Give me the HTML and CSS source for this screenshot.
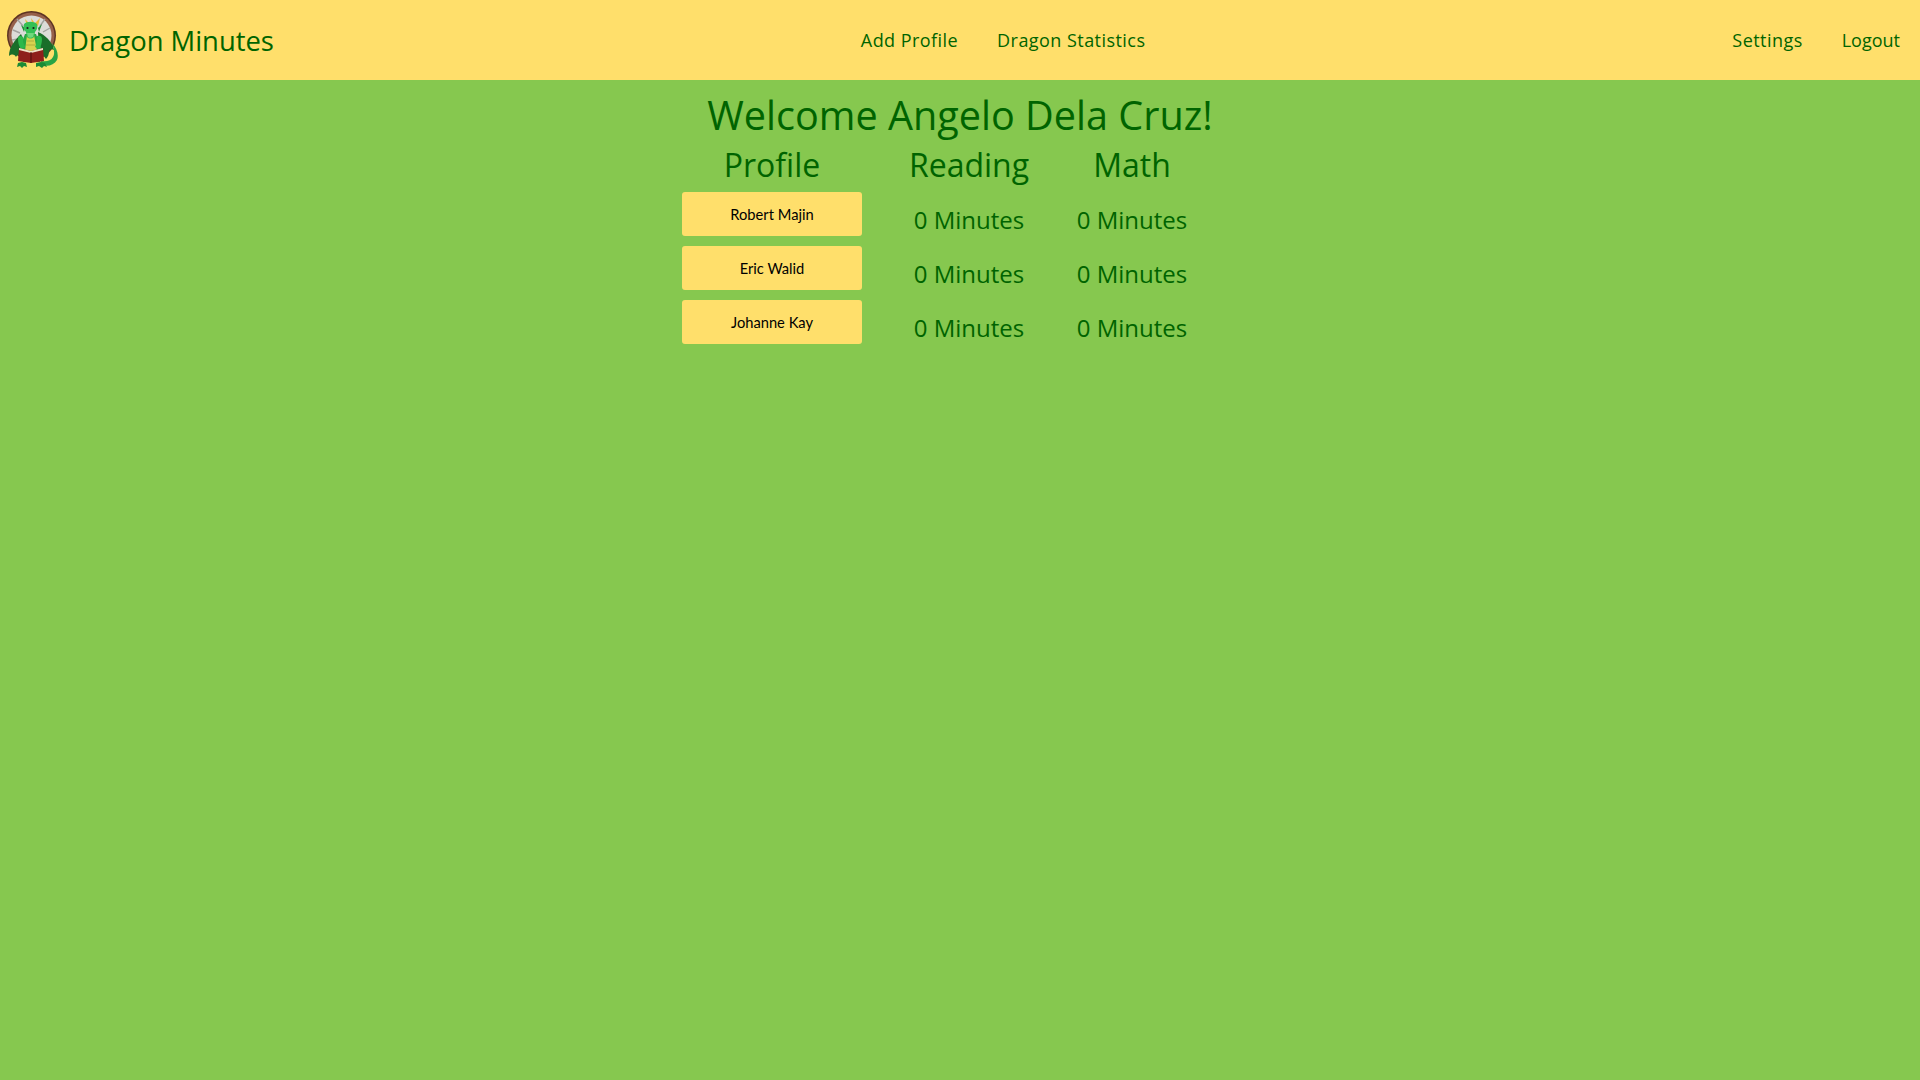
FILE: index.html
```html
<!DOCTYPE html>
<html>
<head>
    <title>Dragon Minutes</title>
    <link rel="stylesheet" href="styles.css">
</head>

<body>
<nav class="navbar">
  <a class="brand" href="#">
    <svg class="logo" viewBox="0 0 52 60" aria-label="Dragon Minutes logo">
      <!-- clock ring -->
      <circle cx="25.5" cy="25.5" r="24.5" fill="#5d3322"/>
      <circle cx="25.5" cy="25.5" r="23" fill="#96604a"/>
      <circle cx="25.5" cy="25.5" r="20" fill="#dcdcd8"/>
      <path d="M7 20l7 3M44 18l-7 4M11 9l6 7M39 9l-5 7M6 30l6-1" stroke="#a3a3a0" stroke-width="1.4" fill="none"/>
      <!-- wings -->
      <path d="M15 24C9 30 3 37 3 46c3-2 5-2 7 1 1-2 3-3 5-2l4-12z" fill="#1a6e29"/>
      <path d="M32 22c7 3 14 9 16 18-2-1-4-1-5 1 0 3-1 6-3 8l-7-9z" fill="#1a6e29"/>
      <!-- tail -->
      <path d="M36 55c6 2 12 0 15-5 2-5 0-12-5-17 2 6 3 11 1 14-2 4-7 5-12 4z" fill="#2aa445"/>
      <!-- body -->
      <path d="M19 24h11l5 13-1 15H17l-3-15z" fill="#26a843"/>
      <path d="M21 25h7l3 16H19z" fill="#d8d24f"/>
      <path d="M21 31h7M20 35h9" stroke="#a8a53a" stroke-width=".8"/>
      <!-- arms -->
      <path d="M17 27c-3-2-5-1-5 2 0 4 1 7 3 10l4-2-2-5z" fill="#2db84a"/>
      <path d="M31 26c3-1 5 0 5 3 0 4-1 7-3 10l-4-2 2-5z" fill="#2db84a"/>
      <!-- head -->
      <path d="M19 9l2 7 3-2zM34 8l-2 8-4-2zM25 8l1 5 2-1z" fill="#e9bb3c"/>
      <path d="M15 15l4 3-1 4zM36 14l-4 4 1 4z" fill="#1e8a35"/>
      <path d="M18 14c3-3 10-3 13 0 1 3 0 6-2 8l-1 5c-2 2-5 2-7 0l-1-5c-2-2-3-5-2-8z" fill="#34c054"/>
      <path d="M21 23h7l-1 4c-2 1-4 1-5 0z" fill="#6fd87c"/>
      <circle cx="21.5" cy="18" r="1.1" fill="#1b1b1b"/>
      <circle cx="27.5" cy="18" r="1.1" fill="#1b1b1b"/>
      <!-- book -->
      <path d="M13 38l12 3 12-3 1 13-13 2-13-2z" fill="#8e1f1c"/>
      <path d="M13 38l12 3 12-3v2l-12 3-12-3z" fill="#ece2c6"/>
      <path d="M25 42v11" stroke="#4d0e0c" stroke-width="1"/>
      <!-- feet -->
      <path d="M12 53l4-1 4 1 1 4-3-1-2 2-2-2-3 1zM30 53l5-1 4 1 2 4-3-1-2 2-3-2-3 1z" fill="#1c8a35"/>
    </svg>
    <span class="brand-name">Dragon Minutes</span>
  </a>
  <div class="nav-links">
    <a href="#">Add Profile</a>
    <a href="#">Dragon Statistics</a>
  </div>
  <div class="nav-links">
    <a href="#">Settings</a>
    <a class="logout" href="#">Logout</a>
  </div>
</nav>

<main class="content">
  <h1>Welcome Angelo Dela Cruz!</h1>
  <div class="minutes">
    <h2>Profile</h2>
    <h2>Reading</h2>
    <h2>Math</h2>

    <button type="button">Robert Majin</button>
    <span class="count">0 Minutes</span>
    <span class="count">0 Minutes</span>

    <button type="button">Eric Walid</button>
    <span class="count">0 Minutes</span>
    <span class="count">0 Minutes</span>

    <button type="button">Johanne Kay</button>
    <span class="count">0 Minutes</span>
    <span class="count">0 Minutes</span>
  </div>
</main>
</body>
</html>
```

FILE: styles.css
```css
* {
  margin: 0;
  padding: 0;
  box-sizing: border-box;
}

body {
  min-height: 1080px;
  background-color: #86c84f;
  color: #006400;
  font-family: "Comic Sans MS", "Open Sans", sans-serif;
}

a {
  color: #006400;
  text-decoration: none;
}

.navbar {
  height: 80px;
  display: flex;
  justify-content: space-between;
  align-items: center;
  background-color: #ffdf6b;
}

.brand {
  display: flex;
  align-items: center;
  gap: 11px;
  padding: 0 20px 0 6px;
}

.logo {
  width: 52px;
  height: 60px;
}

.brand-name {
  font-size: 27.4px;
}

.nav-links {
  display: flex;
  gap: 39px;
  padding: 0 20px;
  font-size: 18px;
  letter-spacing: .45px;
}

.logout {
  letter-spacing: 0;
}

.content {
  display: flex;
  flex-direction: column;
  align-items: center;
}

h1 {
  font-size: 39.6px;
  font-weight: 400;
  line-height: 56px;
  margin-top: 7px;
}

.minutes {
  display: grid;
  grid-template-columns: 180px 116px 112px;
  column-gap: 49px;
  row-gap: 10px;
  padding-right: 50px;
  justify-items: center;
  align-items: center;
}

h2 {
  font-size: 32px;
  font-weight: 400;
  line-height: 34px;
  padding-top: 5px;
}

button {
  width: 180px;
  height: 44px;
  border: none;
  border-radius: 3px;
  background-color: #ffdf6b;
  color: #000;
  font-family: Lato, sans-serif;
  font-size: 14.7px;
  cursor: pointer;
}

.count {
  height: 44px;
  font-size: 24px;
  line-height: 44px;
  padding-top: 6px;
}
```
